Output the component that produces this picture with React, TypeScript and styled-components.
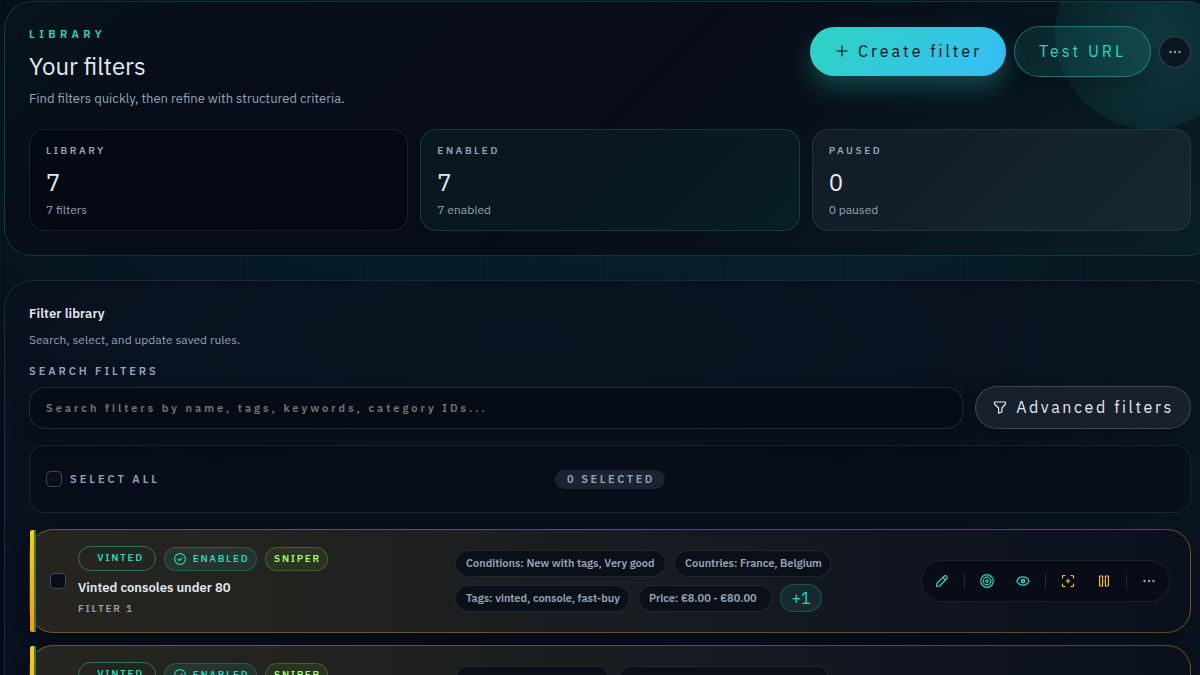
import React from "react";
import styled, { createGlobalStyle, css } from "styled-components";

const teal = "#2dd4bf";
const muted = "#94a3b8";
const ink = "#e2e8f0";

const GlobalStyle = createGlobalStyle`
  *, *::before, *::after { box-sizing: border-box; }
  body {
    margin: 0;
    height: 675px;
    overflow: hidden;
    background:
      repeating-linear-gradient(90deg, rgba(148, 163, 184, 0.018) 0 1px, transparent 1px 120px),
      radial-gradient(ellipse 900px 420px at 900px 250px, rgba(18, 85, 100, 0.25), transparent 100%),
      radial-gradient(ellipse 700px 300px at 250px 170px, rgba(14, 80, 105, 0.22), transparent 100%),
      #040b14;
    color: ${ink};
    font-family: "IBM Plex Sans", Roboto, "Liberation Sans", sans-serif;
  }
  h1, h2, h3, p { margin: 0; }
  button, input { font-family: inherit; }
`;

const Page = styled.main`
  width: 1216px;
  height: 675px;
  overflow: hidden;
  padding: 1px 0 0 4px;
  display: flex;
  flex-direction: column;
  gap: 24px;
`;

const Panel = styled.section`
  position: relative;
  flex: none;
  width: 1212px;
  padding: 24px;
  border-radius: 28px;
  overflow: hidden;
`;

const Hero = styled(Panel)`
  height: 255px;
  border: 1px solid rgba(45, 212, 191, 0.2);
  background: linear-gradient(135deg, #07151b 0%, #070e19 14%, #080c17 50%, #07131d 72%, #0a1f28 100%);
`;

const Orb = styled.div`
  position: absolute;
  top: -65px;
  right: -32px;
  width: 192px;
  height: 192px;
  border-radius: 50%;
  background: radial-gradient(circle, rgba(45, 212, 191, 0.18), rgba(45, 212, 191, 0.08) 70%);
`;

const HeroTop = styled.div`
  position: relative;
  display: flex;
  justify-content: space-between;
  height: 103px;
`;

const HeroText = styled.div`
  display: flex;
  flex-direction: column;
`;

const Eyebrow = styled.p`
  font-size: 11px;
  line-height: 17px;
  font-weight: 600;
  letter-spacing: 4.4px;
  color: ${teal};
`;

const Title = styled.h1`
  margin-top: 7px;
  font-size: 24px;
  line-height: 32px;
  font-weight: 400;
`;

const Lead = styled.p`
  margin-top: 7px;
  font-size: 13px;
  line-height: 20px;
  color: ${muted};
`;

const HeroActions = styled.div`
  display: flex;
  align-items: center;
  gap: 8px;
  height: 51px;
`;

const pill = css`
  display: flex;
  align-items: center;
  justify-content: center;
  flex: none;
  padding: 0;
  border-radius: 999px;
  font-size: 16px;
  white-space: nowrap;
`;

const CreateButton = styled.button`
  ${pill}
  gap: 8px;
  width: 196px;
  height: 49px;
  padding-bottom: 1px;
  border: 0;
  color: #04111b;
  letter-spacing: 3.02px;
  background: linear-gradient(135deg, #2dd4bf, #38bdf8);
  box-shadow: 0 12px 24px rgba(45, 212, 191, 0.28);
`;

const TestButton = styled.button`
  ${pill}
  width: 137px;
  height: 51px;
  padding-bottom: 1px;
  border: 1px solid rgba(45, 212, 191, 0.42);
  color: ${teal};
  letter-spacing: 3.02px;
  background: rgba(45, 212, 191, 0.11);
  box-shadow: 0 8px 20px rgba(0, 0, 0, 0.25);
`;

const RoundButton = styled.button`
  ${pill}
  width: 32px;
  height: 32px;
  border: 1px solid rgba(148, 163, 184, 0.3);
  color: ${muted};
  background: #0b1820;
`;

const Stats = styled.div`
  position: relative;
  display: grid;
  grid-template-columns: repeat(3, 1fr);
  gap: 12px;
`;

const statTones = {
  plain: css`
    border-color: rgba(148, 163, 184, 0.15);
    background: rgba(3, 7, 16, 0.6);
  `,
  teal: css`
    border-color: rgba(45, 212, 191, 0.2);
    background: rgba(45, 212, 191, 0.055);
  `,
  slate: css`
    border-color: rgba(148, 163, 184, 0.16);
    background: rgba(148, 163, 184, 0.08);
  `,
};

const StatCard = styled.article<{ $tone: keyof typeof statTones }>`
  height: 102px;
  padding: 12px 16px;
  border: 1px solid;
  border-radius: 16px;
  ${(p) => statTones[p.$tone]}
`;

const StatLabel = styled.p`
  font-size: 10px;
  line-height: 18px;
  font-weight: 600;
  letter-spacing: 2.55px;
  color: ${muted};
`;

const StatValue = styled.p`
  margin-top: 6px;
  font-size: 24px;
  line-height: 32px;
`;

const StatNote = styled.p`
  margin-top: 4px;
  font-size: 12px;
  line-height: 16px;
  color: ${muted};
`;

const Library = styled(Panel)`
  height: 520px;
  border: 1px solid rgba(148, 163, 184, 0.16);
  background:
    radial-gradient(ellipse 620px 180px at 520px 60px, rgba(10, 42, 50, 0.18), transparent 100%),
    radial-gradient(ellipse 260px 400px at 1212px 150px, rgba(8, 36, 40, 0.3), transparent 100%),
    #09101e;
`;

const LibraryTitle = styled.h2`
  margin-top: 1px;
  font-size: 13px;
  line-height: 16px;
  font-weight: 600;
  letter-spacing: 0.08px;
`;

const LibraryNote = styled.p`
  margin-top: 9px;
  font-size: 12px;
  line-height: 18px;
  letter-spacing: 0.03px;
  color: ${muted};
`;

const CapsLabel = styled.span<{ $spacing?: number }>`
  font-size: 11px;
  line-height: 16px;
  font-weight: 600;
  letter-spacing: ${(p) => p.$spacing ?? 2.95}px;
  text-transform: uppercase;
  color: ${muted};
`;

const SearchLabel = styled(CapsLabel)`
  display: block;
  margin-top: 14px;
`;

const SearchRow = styled.div`
  display: flex;
  align-items: center;
  gap: 12px;
  margin-top: 7px;
  height: 43px;
`;

const SearchInput = styled.input`
  width: 934px;
  height: 42px;
  padding: 0 16px;
  border: 1px solid rgba(148, 163, 184, 0.2);
  border-radius: 16px;
  outline: none;
  background: #060c15;
  color: ${ink};
  font-size: 11px;
  font-weight: 600;
  letter-spacing: 3px;
  box-shadow: 0 8px 20px rgba(0, 0, 0, 0.25);
  &::placeholder { color: #757575; opacity: 1; }
`;

const AdvancedButton = styled.button`
  ${pill}
  gap: 9px;
  width: 216px;
  height: 43px;
  padding: 0 0 1px 1px;
  border: 1px solid rgba(148, 163, 184, 0.3);
  color: ${ink};
  letter-spacing: 2.6px;
  background: #17202b;
  box-shadow: 0 8px 20px rgba(0, 0, 0, 0.25);
`;

const SelectBar = styled.div`
  display: grid;
  grid-template-columns: 1fr auto 1fr;
  align-items: center;
  width: 1162px;
  height: 68px;
  margin-top: 16px;
  padding: 0 16px;
  border: 1px solid rgba(148, 163, 184, 0.15);
  border-radius: 16px;
  background: rgba(7, 12, 25, 0.65);
`;

const SelectAll = styled.label`
  display: flex;
  align-items: center;
  gap: 8px;
`;

const Checkbox = styled.span`
  flex: none;
  width: 16px;
  height: 16px;
  border: 1px solid rgba(148, 163, 184, 0.4);
  border-radius: 5px;
  background: #090e1a;
`;

const SelectedCount = styled(CapsLabel)`
  display: flex;
  align-items: center;
  justify-content: center;
  width: 110px;
  height: 19px;
  padding-left: 2px;
  border-radius: 999px;
  background: rgba(148, 163, 184, 0.14);
`;

const Rows = styled.div`
  display: flex;
  flex-direction: column;
  gap: 12px;
  width: 1162px;
  margin-top: 16px;
`;

const Row = styled.article`
  position: relative;
  display: flex;
  align-items: center;
  height: 104px;
  padding: 0 20px;
  border: 1px solid rgba(251, 191, 36, 0.34);
  border-left-color: rgba(251, 191, 36, 0.2);
  border-radius: 24px;
  background: linear-gradient(90deg, #272520 0%, #23231f 20%, #1b1e20 43%, #121620 72%, #09101c 100%);
  box-shadow: 0 8px 20px rgba(0, 0, 0, 0.3);
`;

const RowStripe = styled.div`
  position: absolute;
  left: 0;
  top: 0;
  width: 6px;
  height: 102px;
  border-radius: 2px 0 0 2px;
  background:
    linear-gradient(#facc15, #f59e0b) 0 0 / 4px 100% no-repeat,
    #34766a;
`;

const RowMain = styled.div`
  display: flex;
  flex-direction: column;
  width: 377px;
  margin-left: 12px;
`;

const Badges = styled.div`
  display: flex;
  align-items: flex-end;
  gap: 8px;
`;

const badgeTones = {
  outline: css`
    width: 78px;
    height: 25px;
    padding: 0 0 1px 7px;
    color: ${teal};
    border-color: rgba(45, 212, 191, 0.45);
  `,
  teal: css`
    width: 93px;
    height: 24px;
    padding-left: 2px;
    gap: 7px;
    color: ${teal};
    border-color: rgba(45, 212, 191, 0.25);
    background: rgba(45, 212, 191, 0.1);
  `,
  lime: css`
    width: 63px;
    height: 24px;
    padding-left: 2px;
    color: #a3f77b;
    border-color: rgba(132, 204, 60, 0.3);
    background: rgba(132, 204, 60, 0.1);
  `,
};

const Badge = styled.span<{ $tone: keyof typeof badgeTones }>`
  display: flex;
  align-items: center;
  justify-content: center;
  border: 1px solid;
  border-radius: 999px;
  font-size: 10px;
  line-height: 14px;
  font-weight: 600;
  letter-spacing: 1.7px;
  ${(p) => badgeTones[p.$tone]}
`;

const RowTitle = styled.h3`
  margin-top: 8px;
  font-size: 13px;
  line-height: 17px;
  font-weight: 600;
`;

const RowNumber = styled.p`
  margin-top: 5px;
  font-size: 10px;
  line-height: 15px;
  font-weight: 600;
  letter-spacing: 1.8px;
  color: ${muted};
`;

const Chips = styled.div`
  display: flex;
  flex-wrap: wrap;
  align-items: flex-end;
  gap: 7px 8px;
  width: 400px;
`;

const Chip = styled.span<{ $width: number }>`
  display: flex;
  align-items: center;
  width: ${(p) => p.$width}px;
  height: 27px;
  padding: 0 0 2px 10px;
  border: 1px solid rgba(148, 163, 184, 0.16);
  border-radius: 999px;
  background: #0b1018;
  color: ${muted};
  font-size: 11px;
  line-height: 16px;
  font-weight: 600;
  letter-spacing: -0.03px;
  white-space: nowrap;
`;

const MoreChip = styled.button`
  ${pill}
  width: 42px;
  height: 28px;
  border: 1px solid rgba(45, 212, 191, 0.25);
  background: rgba(45, 212, 191, 0.1);
  color: ${teal};
`;

const Toolbar = styled.div`
  display: flex;
  align-items: center;
  justify-content: space-between;
  width: 249px;
  height: 42px;
  margin-left: auto;
  padding: 0 12px;
  border: 1px solid rgba(148, 163, 184, 0.14);
  border-radius: 999px;
  background: #080c17;
`;

const ToolGroup = styled.div`
  display: flex;
  gap: 20px;
`;

const Divider = styled.span`
  width: 1px;
  height: 16px;
  background: rgba(148, 163, 184, 0.2);
`;

const Glyph = styled.svg<{ $color?: string; $size?: number }>`
  display: block;
  flex: none;
  width: ${(p) => p.$size ?? 16}px;
  height: ${(p) => p.$size ?? 16}px;
  color: ${(p) => p.$color ?? "inherit"};
  fill: none;
  stroke: currentColor;
  stroke-width: 1.2;
  stroke-linecap: round;
  stroke-linejoin: round;
`;

const Dots = ({ color = muted }: { color?: string }) => (
  <Glyph viewBox="0 0 16 16" $color={color}>
    {[3.5, 8, 12.5].map((x) => (
      <circle key={x} cx={x} cy="8" r="1.2" fill="currentColor" stroke="none" />
    ))}
  </Glyph>
);

const Plus = () => (
  <Glyph viewBox="0 0 16 16">
    <path d="M8 3v10M3 8h10" />
  </Glyph>
);

const Funnel = () => (
  <Glyph viewBox="0 0 14 14" $size={14}>
    <path d="M1.500 2h11v2L8.900 8v4L5.600 13.100V8L1.500 4z" />
  </Glyph>
);

const CheckCircle = () => (
  <Glyph viewBox="0 0 12 12" $size={12}>
    <circle cx="6" cy="6" r="5.4" strokeWidth="1.1" />
    <path d="M4 6.2l1.4 1.3L8 4.8" strokeWidth="1.1" />
  </Glyph>
);

const Pencil = () => (
  <Glyph viewBox="0 0 16 16" $color={teal}>
    <path d="M2.500 13.500l.4-3.200 7-6.900c.9-.8 2.100-.9 2.800-.2.700.7.600 1.900-.2 2.800l-6.900 7zM9 4.700l2.300 2.300" />
  </Glyph>
);

const Target = () => (
  <Glyph viewBox="0 0 16 16" $color={teal}>
    <circle cx="8" cy="8" r="6.300" />
    <circle cx="8" cy="8" r="3.800" />
    <circle cx="8" cy="8" r="1.300" />
  </Glyph>
);

const Eye = () => (
  <Glyph viewBox="0 0 16 16" $color={teal}>
    <path d="M1.900 8C3 5.400 5.200 3.900 8 3.900S13 5.400 14.100 8C13 10.600 10.800 12.100 8 12.100S3 10.600 1.900 8z" />
    <circle cx="8" cy="8" r="1.700" fill="currentColor" fillOpacity="0.6" />
  </Glyph>
);

const Scan = () => (
  <Glyph viewBox="0 0 16 16" $color="#fbbf24">
    <path d="M2.500 5V3.500c0-.6.4-1 1-1H5M11 2.500h1.500c.6 0 1 .4 1 1V5M13.500 11v1.500c0 .6-.4 1-1 1H11M5 13.500H3.500c-.6 0-1-.4-1-1V11M8 6.200v3.600M6.200 8h3.600" />
  </Glyph>
);

const Pause = () => (
  <Glyph viewBox="0 0 16 16" $color="#fbbf24">
    <rect x="3.600" y="3" width="3" height="10" rx=".4" />
    <rect x="9.400" y="3" width="3" height="10" rx=".4" />
  </Glyph>
);

const stats = [
  { label: "LIBRARY", value: 7, note: "7 filters", tone: "plain" },
  { label: "ENABLED", value: 7, note: "7 enabled", tone: "teal" },
  { label: "PAUSED", value: 0, note: "0 paused", tone: "slate" },
] as const;

const filters = [
  {
    title: "Vinted consoles under 80",
    chips: [
      { text: "Conditions: New with tags, Very good", width: 211 },
      { text: "Countries: France, Belgium", width: 157 },
      { text: "Tags: vinted, console, fast-buy", width: 175 },
      { text: "Price: €8.00 - €80.00", width: 134 },
    ],
  },
  {
    title: "Vinted toddler boys",
    chips: [
      { text: "Categories: Toddler Boys", width: 155 },
      { text: "Conditions: New with tags, Very good", width: 212 },
      { text: "Tags: vinted, kids, fast-buy", width: 175 },
      { text: "Price: €5.00 - €40.00", width: 134 },
    ],
  },
];

export default function App() {
  return (
    <>
      <GlobalStyle />
      <Page>
        <Hero>
          <Orb />
          <HeroTop>
            <HeroText>
              <Eyebrow>LIBRARY</Eyebrow>
              <Title>Your filters</Title>
              <Lead>Find filters quickly, then refine with structured criteria.</Lead>
            </HeroText>
            <HeroActions>
              <CreateButton>
                <Plus />
                Create filter
              </CreateButton>
              <TestButton>Test URL</TestButton>
              <RoundButton aria-label="More actions">
                <Dots />
              </RoundButton>
            </HeroActions>
          </HeroTop>
          <Stats>
            {stats.map((s) => (
              <StatCard key={s.label} $tone={s.tone}>
                <StatLabel>{s.label}</StatLabel>
                <StatValue>{s.value}</StatValue>
                <StatNote>{s.note}</StatNote>
              </StatCard>
            ))}
          </Stats>
        </Hero>

        <Library>
          <LibraryTitle>Filter library</LibraryTitle>
          <LibraryNote>Search, select, and update saved rules.</LibraryNote>
          <SearchLabel>Search filters</SearchLabel>
          <SearchRow>
            <SearchInput placeholder="Search filters by name, tags, keywords, category IDs..." />
            <AdvancedButton>
              <Funnel />
              Advanced filters
            </AdvancedButton>
          </SearchRow>
          <SelectBar>
            <SelectAll>
              <Checkbox />
              <CapsLabel>Select all</CapsLabel>
            </SelectAll>
            <SelectedCount $spacing={2.55}>0 selected</SelectedCount>
          </SelectBar>
          <Rows>
            {filters.map((f, i) => (
              <Row key={f.title}>
                <RowStripe />
                <Checkbox />
                <RowMain>
                  <Badges>
                    <Badge $tone="outline">VINTED</Badge>
                    <Badge $tone="teal">
                      <CheckCircle />
                      ENABLED
                    </Badge>
                    <Badge $tone="lime">SNIPER</Badge>
                  </Badges>
                  <RowTitle>{f.title}</RowTitle>
                  <RowNumber>FILTER {i + 1}</RowNumber>
                </RowMain>
                <Chips>
                  {f.chips.map((c) => (
                    <Chip key={c.text} $width={c.width}>
                      {c.text}
                    </Chip>
                  ))}
                  <MoreChip>+1</MoreChip>
                </Chips>
                <Toolbar>
                  <Pencil />
                  <Divider />
                  <ToolGroup>
                    <Target />
                    <Eye />
                  </ToolGroup>
                  <Divider />
                  <ToolGroup>
                    <Scan />
                    <Pause />
                  </ToolGroup>
                  <Divider />
                  <Dots />
                </Toolbar>
              </Row>
            ))}
          </Rows>
        </Library>
      </Page>
    </>
  );
}
